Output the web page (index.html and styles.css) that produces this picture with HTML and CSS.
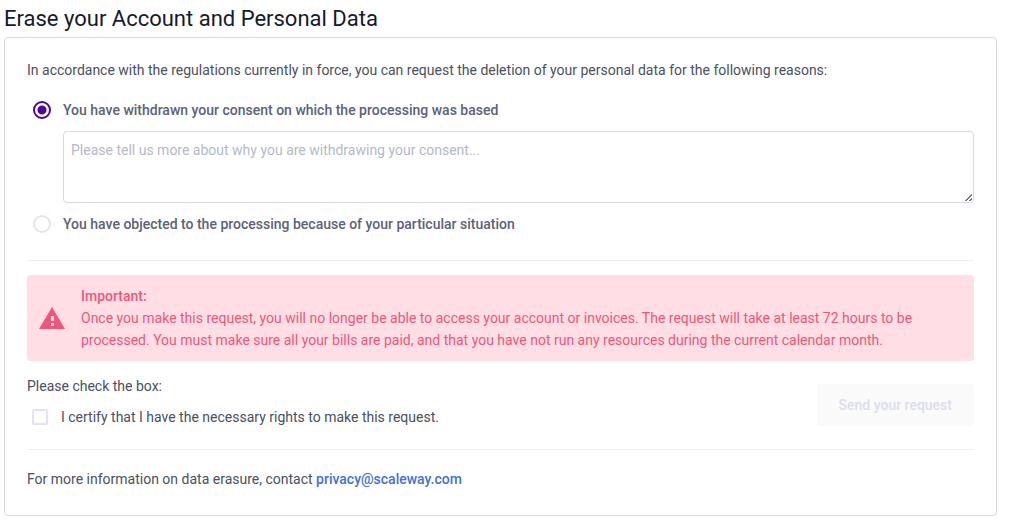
FILE: index.html
```html
<!DOCTYPE html>
<html lang="en">
<head>
<meta charset="utf-8">
<meta name="viewport" content="width=device-width, initial-scale=1">
<title>Erase your Account and Personal Data</title>
<link rel="stylesheet" href="styles.css">
</head>
<body>
<main class="page">
  <h1 class="title">Erase your Account and Personal Data</h1>
  <form class="card">
    <p class="intro">In accordance with the regulations currently in force, you can request the deletion of your personal data for the following reasons:</p>
    <div class="reasons">
      <div class="option">
        <input class="radio" type="radio" name="reason" id="withdrawn" checked>
        <label class="option-label" for="withdrawn">You have withdrawn your consent on which the processing was based</label>
      </div>
      <textarea class="details" aria-label="Details" placeholder="Please tell us more about why you are withdrawing your consent..."></textarea>
      <div class="option">
        <input class="radio" type="radio" name="reason" id="objected">
        <label class="option-label" for="objected">You have objected to the processing because of your particular situation</label>
      </div>
    </div>
    <hr class="divider">
    <div class="alert" role="alert">
      <svg class="alert-icon" viewBox="0 0 26 22" aria-hidden="true">
        <path fill="#f1567a" fill-rule="evenodd" d="M13 0 26 22H0ZM12 9v5h3V9ZM12 16v3h3v-3Z"/>
      </svg>
      <div class="alert-text">
        <strong class="alert-title">Important:</strong>
        <p class="alert-body">Once you make this request, you will no longer be able to access your account or invoices. The request will take at least 72 hours to be processed. You must make sure all your bills are paid, and that you have not run any resources during the current calendar month.</p>
      </div>
    </div>
    <div class="confirm">
      <div class="certify">
        <p class="prompt">Please check the box:</p>
        <div class="check-row">
          <input class="checkbox" type="checkbox" id="certify">
          <label for="certify">I certify that I have the necessary rights to make this request.</label>
        </div>
      </div>
      <button class="submit" type="submit" disabled>Send your request</button>
    </div>
    <hr class="divider">
    <p class="contact">For more information on data erasure, contact <a class="link" href="mailto:privacy@scaleway.com">privacy@scaleway.com</a></p>
  </form>
</main>
</body>
</html>
```
FILE: styles.css
```css
* { box-sizing: border-box; }
body {
  margin: 0;
  background: #fff;
  color: #4a4f62;
  font: 14px/22px Roboto, "Noto Sans", sans-serif;
}
p { margin: 0; }
.page { padding: 4px 12px 8px 4px; }
.title {
  margin: 0 0 3px;
  color: #151a2d;
  font-size: 22px;
  font-weight: 400;
  line-height: 30px;
}
.card {
  padding: 21px 22px 25px;
  border: 1px solid #d4dae7;
  border-radius: 4px;
}
.reasons { display: grid; padding: 18px 0 25px; }
.option { display: flex; align-items: center; padding-left: 6px; gap: 12px; }
.option-label { color: #5c6277; font-weight: 500; }
.radio {
  appearance: none;
  width: 18px;
  height: 18px;
  margin: 0;
  border: 2px solid #e2e5f0;
  border-radius: 50%;
}
.radio:checked {
  border-color: #4f0599;
  background: radial-gradient(circle, #4f0599 4px, transparent 5px);
}
.details {
  height: 72px;
  margin: 10px 0 10px 36px;
  padding: 7px;
  border: 1px solid #d4dae7;
  border-radius: 4px;
  color: inherit;
  font: inherit;
}
.details::placeholder { color: #b5b9c9; }
.details::-webkit-resizer {
  background:
    linear-gradient(135deg, #fff 50%, transparent 50%) right 1px bottom 1px / 10px 10px no-repeat,
    repeating-linear-gradient(135deg, #777 0 1px, #fff 1px 3px) right 1px bottom 1px / 10px 10px no-repeat;
}
.divider { margin: 0; border: 0; border-top: 1px solid #eeeff5; }
.alert {
  display: flex;
  align-items: center;
  gap: 16px;
  margin-top: 14px;
  padding: 10px 12px;
  border-radius: 4px;
  background: #ffdfe5;
  color: #f1567a;
}
.alert-icon { flex: none; width: 26px; height: 22px; }
.alert-title { display: block; font-weight: 500; }
.confirm {
  display: flex;
  align-items: center;
  justify-content: space-between;
  padding: 14px 0 21px;
}
.check-row { display: flex; align-items: center; gap: 13px; margin-top: 9px; padding-left: 5px; }
.checkbox {
  appearance: none;
  width: 16px;
  height: 16px;
  margin: 0;
  border: 2px solid #e2e5f0;
  border-radius: 2px;
}
.submit {
  margin-top: 6px;
  padding: 10px 22px;
  border: 0;
  border-radius: 4px;
  background: #fafafa;
  color: #dadeeb;
  font: inherit;
  font-weight: 500;
}
.contact { padding-top: 18px; }
.link { color: #4070df; font-weight: 500; text-decoration: none; }
```
